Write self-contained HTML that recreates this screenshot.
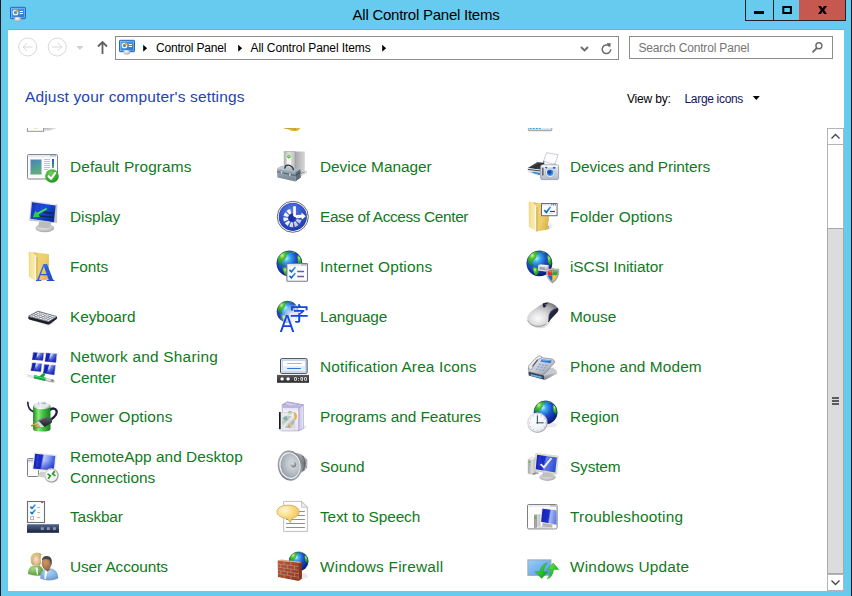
<!DOCTYPE html>
<html lang="en">
<head>
<meta charset="utf-8">
<title>All Control Panel Items</title>
<style>
html,body{margin:0;padding:0;}
body{width:852px;height:596px;overflow:hidden;position:relative;background:#66cbee;font-family:"Liberation Sans",sans-serif;}
#edgeL{position:absolute;left:0;top:0;width:1px;height:596px;background:#1b1b1b;}
#edgeR{position:absolute;left:851px;top:0;width:1px;height:596px;background:#1b1b1b;}
#client{position:absolute;left:8px;top:30px;width:836px;height:561px;background:#fff;}
#cline{position:absolute;left:8px;top:29px;width:836px;height:2px;background:#5bbadb;}
#title{font-size:15.4px;position:absolute;left:0;top:5px;width:852px;text-align:center;font-size:15px;line-height:20px;color:#000;}
#ticon{position:absolute;left:10px;top:6px;width:16px;height:16px;}
.cap{position:absolute;top:0;height:21px;border:1px solid #222;border-top:none;box-sizing:border-box;}
#bmin{left:745px;width:29px;}
#bmax{left:773px;width:27px;}
#bclose{left:799px;width:47px;background:#c75850;border-left:none;}
.abs{position:absolute;}
#addr{position:absolute;left:115px;top:36px;width:504px;height:24px;border:1px solid #8c8c8c;box-sizing:border-box;background:#fff;}
#search{position:absolute;left:629px;top:36px;width:204px;height:23px;border:1px solid #8c8c8c;box-sizing:border-box;background:#fff;}
.t12{position:absolute;font-size:12px;line-height:16px;color:#000;white-space:nowrap;}
#heading{position:absolute;left:25px;top:87px;font-size:15.5px;line-height:20px;color:#2444b0;white-space:nowrap;}
#list{position:absolute;left:8px;top:128px;width:819px;height:463px;overflow:hidden;}
#listin{position:absolute;left:-8px;top:-128px;width:852px;height:596px;}
.it{position:absolute;width:240px;height:32px;}
.it>svg{position:absolute;left:0;top:0;width:32px;height:32px;overflow:visible;}
.lbl{position:absolute;left:44px;top:7px;font-size:15.4px;line-height:20px;color:#107a1c;white-space:nowrap;}
.lbl.two{top:-4.5px;line-height:21px;}
.ln{display:block;}
#sb{position:absolute;left:827px;top:128px;width:17px;height:463px;box-sizing:border-box;border:1px solid #b4b4b4;background:#fff;}
#sbup{position:absolute;left:827px;top:128px;width:17px;height:17px;box-sizing:border-box;border:1px solid #b4b4b4;background:#fff;}
#sbdn{position:absolute;left:827px;top:574px;width:17px;height:17px;box-sizing:border-box;border:1px solid #b4b4b4;background:#fff;}
#thumb{position:absolute;left:827px;top:228px;width:17px;height:346px;box-sizing:border-box;border:1px solid #a8a8a8;background:#dcdcdc;}
</style>
</head>
<body>
<div id="cline"></div>
<div id="client"></div>
<div id="edgeL"></div><div id="edgeR"></div>
<div id="ticon"><svg width="16" height="16" viewBox="0 0 16 16" style="overflow:visible">
<defs>
<linearGradient id="cp1" x1="0" y1="0" x2="1" y2="1"><stop offset="0" stop-color="#58a8f0"/><stop offset="1" stop-color="#2470cc"/></linearGradient>
<radialGradient id="cp2" cx="0.4" cy="0.35" r="0.7"><stop offset="0" stop-color="#ffffff"/><stop offset="1" stop-color="#a4a4a8"/></radialGradient>
</defs>
<rect x="0.5" y="1.3" width="15" height="11.4" rx="0.8" fill="url(#cp1)" stroke="#2468c4" stroke-width="1"/>
<rect x="1.5" y="2.3" width="13" height="9.4" fill="none" stroke="#8ec8f8" stroke-width="0.7" opacity="0.8"/>
<circle cx="5.5" cy="6.5" r="2.3" fill="none" stroke="#fff" stroke-width="1.1"/>
<path d="M5.7 6.3 L5.7 3.6 A2.8 2.8 0 0 1 8.4 6.3z" fill="#f8a020"/>
<path d="M9.8 5.5h3.2M9.8 7.5h3.2" stroke="#fff" stroke-width="1"/>
<ellipse cx="7.7" cy="13.2" rx="3.4" ry="2.3" fill="url(#cp2)"/>
</svg></div>
<div id="title"><span id="title_t" class="fit" style="letter-spacing:-0.247px">All Control Panel Items</span></div>
<div class="cap" id="bmin"><svg width="27" height="19" viewBox="0 0 27 19"><rect x="8" y="11" width="10" height="3" fill="#000"/></svg></div>
<div class="cap" id="bmax"><svg width="25" height="19" viewBox="0 0 25 19"><rect x="9.3" y="7" width="7.6" height="6" fill="none" stroke="#000" stroke-width="2"/></svg></div>
<div class="cap" id="bclose"><svg width="46" height="19" viewBox="0 0 46 19"><path d="M19 6 L22 6 L23.5 8.4 L25 6 L28 6 L25.2 10 L28 14 L25 14 L23.5 11.6 L22 14 L19 14 L21.8 10z" fill="#000"/></svg></div>


<svg class="abs" style="left:16px;top:35px" width="100" height="24" viewBox="0 0 100 24">
 <g fill="none" stroke="#d9d9d9" stroke-width="1">
  <circle cx="11.7" cy="12" r="9"/><circle cx="41.2" cy="12" r="9"/>
  <path d="M16.7 12 H7.2 M11.2 8 L7.2 12 L11.2 16"/>
  <path d="M36.2 12 H45.7 M41.7 8 L45.7 12 L41.7 16"/>
 </g>
 <path d="M60.4 11 h7 l-3.5 4z" fill="#cfcfcf"/>
 <path d="M86.5 19 V7 M82 11.5 L86.5 7 L91 11.5" fill="none" stroke="#606060" stroke-width="1.8"/>
</svg>
<div id="addr"></div>
<div class="abs" style="left:119px;top:39px;width:16px;height:16px"><svg width="16" height="16" viewBox="0 0 16 16" style="overflow:visible">
<defs>
<linearGradient id="cp1_1" x1="0" y1="0" x2="1" y2="1"><stop offset="0" stop-color="#58a8f0"/><stop offset="1" stop-color="#2470cc"/></linearGradient>
<radialGradient id="cp2_1" cx="0.4" cy="0.35" r="0.7"><stop offset="0" stop-color="#ffffff"/><stop offset="1" stop-color="#a4a4a8"/></radialGradient>
</defs>
<rect x="0.5" y="1.3" width="15" height="11.4" rx="0.8" fill="url(#cp1_1)" stroke="#2468c4" stroke-width="1"/>
<rect x="1.5" y="2.3" width="13" height="9.4" fill="none" stroke="#8ec8f8" stroke-width="0.7" opacity="0.8"/>
<circle cx="5.5" cy="6.5" r="2.3" fill="none" stroke="#fff" stroke-width="1.1"/>
<path d="M5.7 6.3 L5.7 3.6 A2.8 2.8 0 0 1 8.4 6.3z" fill="#f8a020"/>
<path d="M9.8 5.5h3.2M9.8 7.5h3.2" stroke="#fff" stroke-width="1"/>
<ellipse cx="7.7" cy="13.2" rx="3.4" ry="2.3" fill="url(#cp2_1)"/>
</svg></div>
<svg class="abs" style="left:142px;top:43px" width="6" height="9" viewBox="0 0 6 9"><path d="M1.2 1.7 L5.1 5.2 L1.2 8.7z" fill="#000"/></svg>
<div class="t12 fit" style="left:156px;top:39.5px;letter-spacing:-0.2px" id="bc1">Control Panel</div>
<svg class="abs" style="left:237px;top:43px" width="6" height="9" viewBox="0 0 6 9"><path d="M1.2 1.7 L5.1 5.2 L1.2 8.7z" fill="#000"/></svg>
<div class="t12 fit" style="left:250.5px;top:39.5px;letter-spacing:-0.081px" id="bc2">All Control Panel Items</div>
<svg class="abs" style="left:381px;top:43px" width="6" height="9" viewBox="0 0 6 9"><path d="M1.2 1.7 L5.1 5.2 L1.2 8.7z" fill="#000"/></svg>
<svg class="abs" style="left:578px;top:42px" width="40" height="14" viewBox="0 0 40 14">
 <path d="M3 5 L6.5 8.5 L10 5" fill="none" stroke="#6b6b6b" stroke-width="1.9"/>
 <path d="M31.5 4.2 A4.3 4.3 0 1 0 32.8 7.3" fill="none" stroke="#6b6b6b" stroke-width="1.5"/>
 <path d="M28.5 1 L32.8 1.2 L32.2 5.5z" fill="#6b6b6b"/>
</svg>
<div id="search"></div>
<div class="t12 fit" style="left:638.5px;top:39.5px;color:#757575;letter-spacing:-0.172px" id="stext">Search Control Panel</div>
<svg class="abs" style="left:811px;top:40px" width="14" height="14" viewBox="0 0 14 14"><circle cx="7.9" cy="5.8" r="3" fill="none" stroke="#6b6b6b" stroke-width="1.4"/><path d="M5.8 8 L1.5 12.3" stroke="#6b6b6b" stroke-width="1.8"/></svg>

<div id="heading" class="fit" style="letter-spacing:0.154px">Adjust your computer's settings</div>
<div class="t12 fit" style="left:627px;top:90.5px;letter-spacing:-0.17px" id="viewby">View by:</div>
<div class="t12 fit" style="left:684.5px;top:90.5px;color:#14145a;letter-spacing:-0.32px" id="large">Large icons</div>
<svg class="abs" style="left:752px;top:95px" width="9" height="6" viewBox="0 0 9 6"><path d="M0.8 1 h7 l-3.5 4z" fill="#000"/></svg>

<div id="list"><div id="listin">
<div class="it" style="left:26px;top:100px"><svg width="32" height="32" viewBox="0 0 32 32">
<path d="M18 27.5 L32 27.5 L24 30.5 L18 30.8z" fill="#c8c8c8" opacity="0.8"/>
<path d="M18 27.5 L28 27.5 L22 28.5 L18 28.6z" fill="#8c8c8c" opacity="0.6"/>
<rect x="1.4" y="26" width="16.2" height="5.3" fill="#fefefe" stroke="#8a8a8e" stroke-width="0.9"/>
<rect x="8" y="27.6" width="3.4" height="0.9" fill="#c8dc30"/>
</svg></div>
<div class="it" style="left:276px;top:100px"><svg width="32" height="32" viewBox="0 0 32 32">
<path d="M6.4 27.8 L24.4 27.8 Q23.4 30 21 30.9 L15.6 30.9 Q13.6 29.6 11 29 Q8.6 28.6 6.4 27.8z" fill="#dcb838"/>
<path d="M6.4 27.8 L17 27.8 Q13 29.4 6.4 27.8z" fill="#b08c1c"/>
<path d="M17.6 28.4v1.4M19.4 28.4v1.4" stroke="#a07c14" stroke-width="0.7"/>
</svg></div>
<div class="it" style="left:526px;top:100px"><svg width="32" height="32" viewBox="0 0 32 32">
<rect x="2.4" y="24" width="23.4" height="6.7" rx="0.8" fill="#f4f6f8" stroke="#909096" stroke-width="0.9"/>
<path d="M3 29.9h22.4" stroke="#b0b0b6" stroke-width="0.8"/>
<path d="M3.8 28.4h1.8M6.8 28.4h1.8M9.8 28.4h1.8M12.8 28.4h1.8" stroke="#18a0e0" stroke-width="1.1"/>
<path d="M16 28.4h9" stroke="#d4ecf8" stroke-width="1"/>
</svg></div>
<div class="it" style="left:26px;top:150px"><svg width="32" height="32" viewBox="0 0 32 32">
<defs>
<linearGradient id="dp1" x1="0" y1="0" x2="0.3" y2="1"><stop offset="0" stop-color="#4a80b4"/><stop offset="0.5" stop-color="#4f9aa0"/><stop offset="1" stop-color="#5fae78"/></linearGradient>
<linearGradient id="dp2" x1="0" y1="0" x2="0" y2="1"><stop offset="0" stop-color="#2458b8"/><stop offset="0.6" stop-color="#3a80a0"/><stop offset="1" stop-color="#5cb858"/></linearGradient>
<radialGradient id="dp3" cx="0.4" cy="0.3" r="0.8"><stop offset="0" stop-color="#6fd05a"/><stop offset="0.6" stop-color="#37a82f"/><stop offset="1" stop-color="#1f8a20"/></radialGradient>
</defs>
<rect x="1.5" y="4.5" width="30" height="24.5" rx="1.3" fill="#fbfbfd" stroke="#85858d" stroke-width="1"/>
<rect x="2.3" y="5.3" width="28.4" height="1.6" fill="#e4e6ee"/>
<path d="M24.5 5.8h1M26.5 5.8h1M28.5 5.8h1" stroke="#6a7088" stroke-width="1"/>
<rect x="4" y="9" width="12" height="16" fill="#d9d6ee"/>
<rect x="4.7" y="9.7" width="10.6" height="14.6" fill="url(#dp1)"/>
<path d="M18 9.5h6M18 11.5h6M18 13.5h6M18 15.5h6M18 17.5h6M18 19.5h4" stroke="#b4bccb" stroke-width="0.9"/>
<rect x="26" y="9" width="2" height="9" fill="url(#dp2)"/>
<circle cx="26" cy="26" r="6.8" fill="url(#dp3)"/>
<path d="M22.6 26.2 L25 28.8 L29.3 22.8" fill="none" stroke="#fff" stroke-width="2.1" stroke-linecap="round" stroke-linejoin="round"/>
</svg><div class="lbl"><span class="ln fit" style="letter-spacing:0.106px">Default Programs</span></div></div>
<div class="it" style="left:26px;top:200px"><svg width="32" height="32" viewBox="0 0 32 32">
<defs>
<linearGradient id="ds1" x1="0" y1="0" x2="1" y2="0.6"><stop offset="0" stop-color="#1a28c8"/><stop offset="0.55" stop-color="#1450d8"/><stop offset="1" stop-color="#0a2f9e"/></linearGradient>
<radialGradient id="ds2" cx="0.45" cy="0.35" r="0.7"><stop offset="0" stop-color="#f0f0f0"/><stop offset="0.6" stop-color="#c8c8c8"/><stop offset="1" stop-color="#9c9c9c"/></radialGradient>
<linearGradient id="ds3" x1="0" y1="0" x2="1" y2="0"><stop offset="0" stop-color="#cfcfcf"/><stop offset="1" stop-color="#efefef"/></linearGradient>
</defs>
<ellipse cx="18.8" cy="28" rx="9.4" ry="4.3" fill="url(#ds2)"/>
<path d="M13 22 L12 27 Q18 29 24 27.5 L25.5 22z" fill="#bcbcbc"/>
<path d="M5 1 L31.3 4.2 L31 23 L3.3 20.6z" fill="url(#ds3)"/>
<path d="M29.2 5 L31.3 4.2 L31 23 L27.8 22.6z" fill="#c4c4c4"/>
<path d="M6 2.3 L29.6 5.4 L28 22.2 L4.4 18.8z" fill="url(#ds1)"/>
<path d="M10.5 4 L12.5 4.3 L11.5 14 L9.5 14z" fill="#3350e0" opacity="0.5"/>
<path d="M15 4.5 L17 4.8 L16 12 L14 12z" fill="#3350e0" opacity="0.5"/>
<path d="M17.6 11.6 L27.8 12.4 L27.7 14 L17.2 13.2z" fill="#14245c"/>
<path d="M13.4 15.2 L27.5 16.4 L27.4 18 L13.3 16.8z" fill="#14245c"/>
<path d="M3.6 19.4 L28 22.4 L28 23 L3.4 20.6z" fill="#bdbdbd"/>
<path d="M20.2 8 L21.3 9.6 L12.5 14.6 L13.9 17 L6.9 17.2 L9.4 10.8 L10.9 13z" fill="#2fd03c"/>
<path d="M20.2 8 L20.75 8.8 L11.3 14 L10.9 13z" fill="#6cf06a" opacity="0.7"/>
</svg><div class="lbl"><span class="ln fit" style="letter-spacing:-0.035px">Display</span></div></div>
<div class="it" style="left:26px;top:250px"><svg width="32" height="32" viewBox="0 0 32 32">
<defs>
<linearGradient id="fo1" x1="0" y1="0" x2="1" y2="0"><stop offset="0" stop-color="#f4df8c"/><stop offset="0.6" stop-color="#f8e9a8"/><stop offset="1" stop-color="#fdf5d4"/></linearGradient>
<linearGradient id="fo2" x1="0" y1="0" x2="1" y2="0.6"><stop offset="0" stop-color="#dcb54a"/><stop offset="0.3" stop-color="#eed274"/><stop offset="0.7" stop-color="#ecce6c"/><stop offset="1" stop-color="#ddb74c"/></linearGradient>
<linearGradient id="fo3" x1="0" y1="0" x2="1" y2="1"><stop offset="0" stop-color="#7aa8f8"/><stop offset="0.45" stop-color="#2c5ce0"/><stop offset="1" stop-color="#1a40b8"/></linearGradient>
</defs>
<path d="M6.7 2.2 L22.9 4 L22.9 29.3 L10.4 31.5 L6.7 20z" fill="url(#fo2)"/>

<path d="M3 1.7 L6.7 2.2 L10.4 6.2 L10.4 31.5 L3.4 26.9z" fill="url(#fo1)"/><path d="M9.3 5 L10.4 6.2 L10.4 31.5 L9.3 30.8z" fill="#fffef6"/><path d="M3 1.7 L3.4 26.9" stroke="#e2c461" stroke-width="0.5"/>
<path d="M10.4 6.2 L10.4 31.5 L11.4 31.3 L11.4 7.2z" fill="#c9a43c"/>
<filter id="fof" x="-0.2" y="-0.2" width="1.4" height="1.4"><feOffset dx="0" dy="0"/></filter><g filter="url(#fof)"><text x="9.8" y="31.4" font-family="Liberation Serif, serif" font-weight="bold" font-size="26" fill="url(#fo3)">A</text></g>
</svg><div class="lbl"><span class="ln fit" style="letter-spacing:-0.1px">Fonts</span></div></div>
<div class="it" style="left:26px;top:300px"><svg width="32" height="32" viewBox="0 0 32 32">
<path d="M2.2 16.4 Q1.8 19 4 19.8 L21.3 24.6 Q23 25 24.4 24 L31.2 18.6 L30.8 16.6 L22.6 21.6z" fill="#1d2026"/>
<path d="M8 20.5 L22 24.5 L27 21.5 L30 22 L23 26 L9 22z" fill="#c8ccd4" opacity="0.3"/>
<path d="M2.4 16.2 Q2.3 15.6 3.2 15.2 L11.4 11 Q12 10.7 13 11 L30.5 16 Q31.3 16.4 30.8 16.9 L23.4 21.6 Q22.6 22 21.6 21.7 L3 16.9 Q2.5 16.7 2.4 16.2z" fill="#70757f"/>
<path d="M3.61 16.12 L5.23 15.29 L7.06 15.77 L5.47 16.60z M6.05 16.75 L7.64 15.92 L9.48 16.40 L7.91 17.24z M8.50 17.39 L10.06 16.56 L11.90 17.04 L10.36 17.87z M10.94 18.03 L12.48 17.19 L14.32 17.67 L12.80 18.51z M13.39 18.66 L14.90 17.83 L16.73 18.31 L15.25 19.15z M15.83 19.30 L17.31 18.46 L19.15 18.94 L17.69 19.78z M18.28 19.94 L19.73 19.10 L21.57 19.58 L20.13 20.42z M20.72 20.57 L22.15 19.73 L23.99 20.21 L22.58 21.06z M5.85 14.97 L7.47 14.14 L9.28 14.62 L7.68 15.45z M8.26 15.60 L9.85 14.77 L11.66 15.25 L10.09 16.08z M10.67 16.23 L12.23 15.40 L14.04 15.88 L12.50 16.71z M13.08 16.87 L14.61 16.03 L16.42 16.51 L14.91 17.35z M15.48 17.50 L16.99 16.66 L18.80 17.14 L17.31 17.98z M17.89 18.13 L19.37 17.30 L21.18 17.78 L19.72 18.62z M20.30 18.77 L21.75 17.93 L23.56 18.41 L22.13 19.25z M22.70 19.40 L24.13 18.56 L25.94 19.04 L24.53 19.88z M8.10 13.81 L9.72 12.99 L11.50 13.46 L9.90 14.29z M10.47 14.45 L12.06 13.61 L13.84 14.09 L12.27 14.92z M12.84 15.08 L14.40 14.24 L16.18 14.72 L14.64 15.56z M15.21 15.71 L16.74 14.87 L18.52 15.35 L17.01 16.19z M17.58 16.34 L19.09 15.50 L20.87 15.98 L19.38 16.82z M19.95 16.97 L21.43 16.13 L23.21 16.61 L21.75 17.45z M22.32 17.60 L23.77 16.76 L25.55 17.24 L24.12 18.08z M24.69 18.23 L26.12 17.39 L27.90 17.86 L26.49 18.71z M10.34 12.66 L11.96 11.84 L13.71 12.31 L12.12 13.14z M12.68 13.29 L14.27 12.46 L16.02 12.94 L14.45 13.77z M15.01 13.92 L16.57 13.09 L18.32 13.56 L16.78 14.40z M17.34 14.55 L18.88 13.71 L20.63 14.19 L19.11 15.02z M19.67 15.18 L21.18 14.34 L22.93 14.81 L21.45 15.65z M22.01 15.80 L23.49 14.96 L25.24 15.44 L23.78 16.28z M24.34 16.43 L25.79 15.59 L27.55 16.06 L26.11 16.91z M26.67 17.06 L28.10 16.21 L29.85 16.69 L28.44 17.54z" fill="#f6f7fa"/>
</svg><div class="lbl"><span class="ln fit" style="letter-spacing:-0.054px">Keyboard</span></div></div>
<div class="it" style="left:26px;top:350px"><svg width="32" height="32" viewBox="0 0 32 32">
<defs>
<linearGradient id="nw1" x1="0" y1="0" x2="1" y2="0.3"><stop offset="0" stop-color="#1a22c4"/><stop offset="0.42" stop-color="#1a2fd0"/><stop offset="0.5" stop-color="#e0e8ff"/><stop offset="0.68" stop-color="#7088ec"/><stop offset="1" stop-color="#1a28b8"/></linearGradient>
<linearGradient id="nw2" x1="0" y1="0" x2="0" y2="1"><stop offset="0" stop-color="#f4f4f4"/><stop offset="0.5" stop-color="#c8cccc"/><stop offset="1" stop-color="#8c9090"/></linearGradient>
<linearGradient id="nw3" x1="0" y1="0" x2="0" y2="1"><stop offset="0" stop-color="#4fe070"/><stop offset="0.5" stop-color="#12b040"/><stop offset="1" stop-color="#0a7a2c"/></linearGradient>
</defs>
<g stroke="#f0e8e0" stroke-width="0.7">
<path d="M7 2 L18.2 2.7 L16.9 10.5 L6 9.8z" fill="url(#nw1)"/>
<path d="M19.8 2.7 L31.2 3.4 L29.9 12.4 L18.8 11.4z" fill="url(#nw1)"/>
<path d="M6 12.4 L16.2 13.4 L14.9 21.8 L4.7 20.8z" fill="url(#nw1)"/>
<path d="M18.1 14.1 L29.9 15.1 L28.2 24.9 L17.1 23.2z" fill="url(#nw1)"/>
</g>
<g fill="#0d1890" opacity="0.55">
<path d="M9.5 2.3 L12 9.9 L6.2 9.6z"/><path d="M22.5 3 L24.5 11.7 L19 11.2z"/>
<path d="M8.5 12.8 L10.5 21.2 L5 20.6z"/><path d="M21 14.5 L23 23.8 L17.4 23z"/>
</g>
<linearGradient id="nw5" x1="0" y1="0" x2="0" y2="1"><stop offset="0.3" stop-color="#1a28c0" stop-opacity="0"/><stop offset="1" stop-color="#1420b0" stop-opacity="0.85"/></linearGradient><g fill="url(#nw5)"><path d="M7 2 L18.2 2.7 L16.9 10.5 L6 9.8z"/><path d="M19.8 2.7 L31.2 3.4 L29.9 12.4 L18.8 11.4z"/><path d="M6 12.4 L16.2 13.4 L14.9 21.8 L4.7 20.8z"/><path d="M18.1 14.1 L29.9 15.1 L28.2 24.9 L17.1 23.2z"/></g>
<path d="M2 25.3 L27 31" stroke="url(#nw2)" stroke-width="3" stroke-linecap="round" fill="none"/>
<path d="M2 25.3 L27 31" stroke="#dfe3e3" stroke-width="1.6" stroke-linecap="round" fill="none"/>
<circle cx="26.3" cy="30.6" r="1.1" fill="#7c8080"/>
<path d="M8 26.7 L19.5 29.3" stroke="#0fa63c" stroke-width="3.4" fill="none"/>
<path d="M14.5 27.6 L17.6 24.6" stroke="#0fa63c" stroke-width="3" stroke-linecap="round" fill="none"/>
<path d="M8.2 26 L19.6 28.6" stroke="#52e078" stroke-width="1" fill="none"/>
</svg><div class="lbl two"><span class="ln fit" style="letter-spacing:0.222px">Network and Sharing</span><span class="ln fit" style="letter-spacing:-0.08px">Center</span></div></div>
<div class="it" style="left:26px;top:400px"><svg width="32" height="32" viewBox="0 0 32 32">
<defs>
<linearGradient id="pw1" x1="0" y1="0" x2="1" y2="0"><stop offset="0" stop-color="#18861e"/><stop offset="0.3" stop-color="#8ae878"/><stop offset="0.55" stop-color="#48c444"/><stop offset="1" stop-color="#177f1e"/></linearGradient>
<linearGradient id="pw2" x1="0" y1="0" x2="1" y2="0"><stop offset="0" stop-color="#b8bcc4"/><stop offset="0.4" stop-color="#ffffff"/><stop offset="1" stop-color="#a8acb4"/></linearGradient>
<linearGradient id="pw3" x1="0" y1="0" x2="0" y2="1"><stop offset="0" stop-color="#62666e"/><stop offset="0.5" stop-color="#3a3d45"/><stop offset="1" stop-color="#1c1e24"/></linearGradient>
<linearGradient id="pw4" x1="0" y1="0" x2="0" y2="1"><stop offset="0" stop-color="#f6d890"/><stop offset="1" stop-color="#b07820"/></linearGradient>
</defs>
<path d="M1.8 2.4 Q2 9.5 7.5 11.8" fill="none" stroke="#1c1c3a" stroke-width="1.6" stroke-linecap="round"/>
<path d="M24 9.8 Q28.5 7 30.5 10.5 Q32 14.5 25 19.5" fill="none" stroke="#1e1e40" stroke-width="2.4" stroke-linecap="round"/>
<path d="M7.1 6 L7.1 29 Q7.1 31.6 15.8 31.6 Q24.5 31.6 24.5 29 L24.5 6z" fill="url(#pw1)"/>
<ellipse cx="15.8" cy="6" rx="8.7" ry="3.2" fill="url(#pw2)"/>
<ellipse cx="15.8" cy="5.2" rx="7.2" ry="2.4" fill="#e6e9ee"/>
<ellipse cx="15.8" cy="3.2" rx="4.2" ry="1.7" fill="url(#pw2)"/>
<ellipse cx="16.5" cy="3.2" rx="2" ry="0.8" fill="#9cc4e8"/>
<path d="M12.6 23.3 L5.8 25.6" stroke="url(#pw4)" stroke-width="1.7" stroke-linecap="round"/>
<path d="M15.6 25.6 L9.8 27.6" stroke="url(#pw4)" stroke-width="1.7" stroke-linecap="round"/>
<path d="M10.4 21.5 L18.8 17 Q20 16.6 21 16.9 L25 18.6 Q26.2 19.2 26.1 20.5 L25.9 22.8 L18.5 27 L14 27z" fill="url(#pw3)"/>
<path d="M10.4 21.5 L18.8 17 L21 16.9 L13 21.3z" fill="#7c8088"/>
<path d="M10.4 21.5 L13 21.3 L18.5 27 L14 27z" fill="#d8dae0"/>
</svg><div class="lbl"><span class="ln fit" style="letter-spacing:0.117px">Power Options</span></div></div>
<div class="it" style="left:26px;top:450px"><svg width="32" height="32" viewBox="0 0 32 32">
<defs>
<linearGradient id="ra1" x1="0" y1="0" x2="1" y2="0.15"><stop offset="0" stop-color="#1420c0"/><stop offset="0.42" stop-color="#1a2cc8"/><stop offset="0.5" stop-color="#c0ccfa"/><stop offset="0.75" stop-color="#8098f0"/><stop offset="1" stop-color="#3858dc"/></linearGradient>
<linearGradient id="ra2" x1="0" y1="0" x2="1" y2="1"><stop offset="0" stop-color="#e8e8e8"/><stop offset="1" stop-color="#8e8e8e"/></linearGradient>
<radialGradient id="ra3" cx="0.4" cy="0.35" r="0.8"><stop offset="0" stop-color="#ffffff"/><stop offset="0.7" stop-color="#f0f0f0"/><stop offset="1" stop-color="#d0d0d0"/></radialGradient>
</defs>
<rect x="1.5" y="8.5" width="11" height="18" rx="0.8" fill="#fafafa" stroke="#7e8086" stroke-width="1"/>
<path d="M2 10.2h10" stroke="#8a98b4" stroke-width="1"/>
<path d="M2 11.8h10" stroke="#c0c4cc" stroke-width="0.8"/>
<path d="M14.5 21.5 L11.3 26.3 L20 28 L21 22z" fill="#cfcfcf"/>
<path d="M8 2.3 L31 4.7 L29 21.9 L6 19.6z" fill="#e9e9e4"/>
<path d="M9.1 3.7 L29.3 6 L27.6 20.5 L7.4 18.5z" fill="url(#ra1)"/>
<path d="M11 5 L13 5.2 L12 17 L10 17z" fill="#4058e0" opacity="0.45"/>
<linearGradient id="ra5" x1="0" y1="0" x2="0" y2="1"><stop offset="0.4" stop-color="#1a2cc8" stop-opacity="0"/><stop offset="1" stop-color="#1424b8" stop-opacity="0.7"/></linearGradient><path d="M9.1 3.7 L29.3 6 L27.6 20.5 L7.4 18.5z" fill="url(#ra5)"/>
<circle cx="25.5" cy="25.5" r="6.6" fill="url(#ra3)" stroke="url(#ra2)" stroke-width="1.3"/>
<path d="M21.8 23.3 L24.3 25.6 L21.8 28.2" fill="none" stroke="#2a9a28" stroke-width="1.7" transform="rotate(-8 25.5 25.5)"/>
<path d="M29.3 21.6 L26.8 24 L29.3 26.4" fill="none" stroke="#2a9a28" stroke-width="1.7" transform="rotate(-8 25.5 25.5)"/>
</svg><div class="lbl two"><span class="ln fit" style="letter-spacing:0.04px">RemoteApp and Desktop</span><span class="ln fit" style="letter-spacing:-0.04px">Connections</span></div></div>
<div class="it" style="left:26px;top:500px"><svg width="32" height="32" viewBox="0 0 32 32">
<defs>
<linearGradient id="tb1" x1="0" y1="0" x2="0" y2="1"><stop offset="0" stop-color="#56658a"/><stop offset="0.5" stop-color="#36466a"/><stop offset="1" stop-color="#14203c"/></linearGradient>
<linearGradient id="tb2" x1="0" y1="0" x2="0" y2="1"><stop offset="0" stop-color="#38b0f0"/><stop offset="1" stop-color="#0a64c8"/></linearGradient>
</defs>
<rect x="1.5" y="1.5" width="17" height="21" fill="#fdfdfd" stroke="#6e6e6e" stroke-width="1.1"/>
<rect x="15" y="2" width="2.2" height="0.9" fill="#e03050"/>
<path d="M4.3 6.6 L6 8.4 L9.4 4.4" fill="none" stroke="url(#tb2)" stroke-width="1.6"/>
<path d="M4.3 11.8 L6 13.6 L9.4 9.6" fill="none" stroke="url(#tb2)" stroke-width="1.6"/>
<rect x="4.6" y="16.6" width="3" height="3.1" fill="#fff" stroke="#a4a4a8" stroke-width="0.8"/>
<path d="M11.2 7.5h3M11.2 12.5h3M11.2 17.5h3" stroke="#b0b0b4" stroke-width="0.9"/>
<rect x="1" y="24.2" width="32" height="8.6" fill="url(#tb1)"/>
<rect x="1" y="24.2" width="32" height="0.8" fill="#7886a8" opacity="0.7"/>
<g fill="#8a94ac"><rect x="14.8" y="27.2" width="3" height="2.8"/><rect x="20.8" y="27.2" width="3" height="2.8"/><rect x="26.9" y="27.2" width="3" height="2.8"/></g>
</svg><div class="lbl"><span class="ln fit" style="letter-spacing:-0.166px">Taskbar</span></div></div>
<div class="it" style="left:26px;top:550px"><svg width="32" height="32" viewBox="0 0 32 32">
<defs>
<radialGradient id="us1" cx="0.35" cy="0.3" r="0.9"><stop offset="0" stop-color="#a8d888"/><stop offset="0.6" stop-color="#6aaa4c"/><stop offset="1" stop-color="#4a8a38"/></radialGradient>
<radialGradient id="us2" cx="0.45" cy="0.3" r="0.9"><stop offset="0" stop-color="#b4d4f4"/><stop offset="0.6" stop-color="#7aa8dc"/><stop offset="1" stop-color="#5684c0"/></radialGradient>
<radialGradient id="us3" cx="0.4" cy="0.35" r="0.8"><stop offset="0" stop-color="#fbe0c0"/><stop offset="1" stop-color="#d8a478"/></radialGradient>
<radialGradient id="us4" cx="0.4" cy="0.4" r="0.8"><stop offset="0" stop-color="#d09a68"/><stop offset="1" stop-color="#8a5a38"/></radialGradient>
<linearGradient id="us5" x1="0" y1="0" x2="1" y2="1"><stop offset="0" stop-color="#e6d49a"/><stop offset="1" stop-color="#b09050"/></linearGradient>
</defs>
<path d="M2 24 Q2 17 7.5 15.6 L13 15.4 Q18 17 17.6 25 Q10 27 2 24z" fill="url(#us1)"/>
<path d="M9.5 17.5 L11.8 17.5 L12 24.5 L11 25z" fill="#f4f6f4"/>
<path d="M4.6 10 Q4 3 10.5 2.4 Q14.5 2.4 15.8 4.6 Q14.5 6 14.6 9 Q15.4 13 14 15.4 L6.2 15 Q4.6 13 4.6 10z" fill="url(#us5)"/>
<ellipse cx="10.6" cy="10.6" rx="3.5" ry="4.9" fill="url(#us3)"/>
<path d="M6.8 8 Q9 4.5 14.2 6.4 Q12 4 9 4.4 Q6.8 5.4 6.8 8z" fill="#d8c488"/>
<path d="M14.2 28.5 Q14 20.5 20 18.6 L26 18.4 Q32.4 20.4 32.2 28.6 Q23 32.6 14.2 28.5z" fill="url(#us2)"/>
<path d="M18.8 20 L21.6 21 L19.6 29.6 L18.4 29z" fill="#f6f8fb"/>
<path d="M18.5 19 L22 18 L24.5 19 L21.5 21.5z" fill="#8a5c3a"/>
<ellipse cx="20.6" cy="13.6" rx="4.9" ry="6.3" fill="url(#us4)"/>
<path d="M15.9 11.5 Q15.5 6 21 6 Q26.4 6.4 25.8 13 L25 15 Q24.6 10.5 22.5 9.4 Q19 8.6 17 9.6 Q16.2 10.4 15.9 11.5z" fill="#45454a"/>
</svg><div class="lbl"><span class="ln fit" style="letter-spacing:-0.102px">User Accounts</span></div></div>
<div class="it" style="left:276px;top:150px"><svg width="32" height="32" viewBox="0 0 32 32">
<defs>
<linearGradient id="dm1" x1="0" y1="0" x2="1" y2="0"><stop offset="0" stop-color="#b8b8b8"/><stop offset="0.5" stop-color="#dedede"/><stop offset="1" stop-color="#c2c2c2"/></linearGradient>
<linearGradient id="dm2" x1="0" y1="0" x2="1" y2="0"><stop offset="0" stop-color="#a0a0a0"/><stop offset="0.6" stop-color="#c8c8c8"/><stop offset="1" stop-color="#dcdcdc"/></linearGradient>
<linearGradient id="dm3" x1="0" y1="0" x2="0" y2="1"><stop offset="0" stop-color="#a2b2c0"/><stop offset="1" stop-color="#74848f"/></linearGradient>
<linearGradient id="dm4" x1="0" y1="0" x2="1" y2="1"><stop offset="0" stop-color="#c8d4dc"/><stop offset="1" stop-color="#9aaab6"/></linearGradient>
<radialGradient id="dm5" cx="0.5" cy="0.4" r="0.6"><stop offset="0" stop-color="#a8ff80"/><stop offset="1" stop-color="#1f9a18"/></radialGradient>
</defs>
<path d="M22 24 L31 20.5 L31 23 L24 27z" fill="#b0b0b0" opacity="0.45"/>
<path d="M25 22.5 l4 -1.4 l0 1 l-4 1.6z" fill="#303030"/>
<path d="M18.8 1.4 L28.9 1.6 L28.9 22 L18.8 25z" fill="url(#dm2)"/>
<path d="M19.5 3h9M19.5 5h9M19.5 7h9M19.5 9h9M19.5 11h9M19.5 13h9M19.5 15h9M19.5 17h9M19.5 19h9M19.5 21h9" stroke="#b4b4b4" stroke-width="0.5" opacity="0.7"/>
<rect x="8.1" y="1.4" width="10.7" height="20" fill="url(#dm1)"/>
<rect x="8.1" y="1.4" width="10.7" height="20" fill="none" stroke="#a6a6a6" stroke-width="0.6"/>
<rect x="10.4" y="4.4" width="5.2" height="11" fill="#f6f6f6" stroke="#c0c0c0" stroke-width="0.4"/>
<circle cx="12.9" cy="6.6" r="1.8" fill="url(#dm5)"/>
<path d="M1 18.2 L5.4 15.5 L24.3 19.2 L19.5 22.5z" fill="url(#dm4)"/>
<path d="M1 18.2 L19.5 22.5 L19.5 31.6 L1.4 27.5z" fill="url(#dm3)"/>
<path d="M19.5 22.5 L24.3 19.2 L24.9 27.5 L19.5 31.6z" fill="#5c6c7a"/>
<path d="M1 21 L19.5 25 L19.5 26.2 L1.1 22.2z" fill="#4a5a6a" opacity="0.8"/>
<path d="M19.5 25 L24.5 21.6 L24.6 22.8 L19.5 26.2z" fill="#3c4c5a" opacity="0.8"/>
<rect x="4.6" y="20.8" width="1.8" height="3.4" rx="0.5" fill="#dfe5ea" stroke="#56646f" stroke-width="0.4"/>
<rect x="13" y="22.8" width="1.8" height="3.4" rx="0.5" fill="#dfe5ea" stroke="#56646f" stroke-width="0.4"/>
<path d="M8.8 18 Q9.5 14.6 12.6 15.2 Q16.5 16 17.4 19.6" fill="none" stroke="#2a2e34" stroke-width="1.3" stroke-linecap="round"/>
</svg><div class="lbl"><span class="ln fit" style="letter-spacing:-0.03px">Device Manager</span></div></div>
<div class="it" style="left:276px;top:200px"><svg width="32" height="32" viewBox="0 0 32 32">
<defs>
<radialGradient id="ea1" cx="0.45" cy="0.3" r="0.8"><stop offset="0" stop-color="#5a7ae8"/><stop offset="0.6" stop-color="#2c4cc4"/><stop offset="1" stop-color="#1a30a0"/></radialGradient>
<linearGradient id="ea2" x1="0" y1="0" x2="1" y2="1"><stop offset="0" stop-color="#ffffff"/><stop offset="0.5" stop-color="#eeeeee"/><stop offset="1" stop-color="#a8acb8"/></linearGradient>
</defs>
<circle cx="16.8" cy="16.8" r="15.5" fill="#fff" stroke="#68686c" stroke-width="1"/>
<circle cx="16.8" cy="16.8" r="14.1" fill="url(#ea1)"/>
<circle cx="15.8" cy="17.6" r="4.2" fill="#1c30a4"/>
<path d="M20.79 18.99 L25.46 20.07 A9.2 9.2 0 0 1 23.65 23.79 L19.92 20.77 A4.4 4.4 0 0 0 20.79 18.99z M19.39 21.32 L22.54 24.94 A9.2 9.2 0 0 1 18.88 26.89 L17.64 22.25 A4.4 4.4 0 0 0 19.39 21.32z M16.88 22.38 L17.30 27.16 A9.2 9.2 0 0 1 13.20 26.59 L14.92 22.11 A4.4 4.4 0 0 0 16.88 22.38z M14.23 21.77 L11.76 25.89 A9.2 9.2 0 0 1 8.78 23.01 L12.81 20.40 A4.4 4.4 0 0 0 14.23 21.77z M12.45 19.72 L8.03 21.59 A9.2 9.2 0 0 1 7.31 17.52 L12.11 17.77 A4.4 4.4 0 0 0 12.45 19.72z M12.21 17.01 L7.54 15.93 A9.2 9.2 0 0 1 9.35 12.21 L13.08 15.23 A4.4 4.4 0 0 0 12.21 17.01z M13.61 14.68 L10.46 11.06 A9.2 9.2 0 0 1 14.12 9.11 L15.36 13.75 A4.4 4.4 0 0 0 13.61 14.68z" fill="url(#ea2)"/>
<path d="M17.2 6.2 h2.7 v9.4 l-1.4 1.6 l-1.3 -1.4z" fill="#fff"/>
<path d="M18.5 16.6 L20.5 15.1 L25.6 14.8 L25.4 12.6 L29.8 16.2 L25.8 19.7 L25.7 17.7 L20.6 18.2z" fill="#fff"/>
</svg><div class="lbl"><span class="ln fit" style="letter-spacing:-0.36px">Ease of Access Center</span></div></div>
<div class="it" style="left:276px;top:250px"><svg width="32" height="32" viewBox="0 0 32 32">
<defs>
<linearGradient id="io2" x1="0" y1="0" x2="0" y2="1"><stop offset="0" stop-color="#38b0f0"/><stop offset="1" stop-color="#0a5cc0"/></linearGradient>
</defs>
<defs><radialGradient id="ioGo" cx="0.38" cy="0.3" r="0.75"><stop offset="0" stop-color="#b4f2ff"/><stop offset="0.2" stop-color="#3ca8f0"/><stop offset="0.5" stop-color="#1c50c8"/><stop offset="0.8" stop-color="#12289a"/><stop offset="1" stop-color="#0a1460"/></radialGradient>
<radialGradient id="ioGg" cx="0.38" cy="0.3" r="0.8"><stop offset="0" stop-color="#d4f480"/><stop offset="0.3" stop-color="#48c030"/><stop offset="0.75" stop-color="#1a8a24"/><stop offset="1" stop-color="#0c5a20"/></radialGradient>
<clipPath id="ioGc"><circle cx="0" cy="0" r="10"/></clipPath></defs>
<g transform="translate(13.4 13.4) scale(1.2700)"><circle cx="0" cy="0" r="10" fill="url(#ioGo)"/>
<g clip-path="url(#ioGc)" fill="url(#ioGg)">
<path d="M-9.6 -3 Q-9 -7 -5.5 -8.8 Q-2 -10.4 0.5 -9.4 Q-0.5 -7.6 -2.6 -7 Q-1.6 -5 -3.4 -3.6 Q-4.6 -1.4 -6 -1.6 Q-6.4 0.4 -4.6 1.4 L-5.6 1.8 Q-8.4 0.6 -9.6 -3z"/>
<path d="M-5.4 3.2 Q-3 2.4 -1.2 4 Q0.4 5.4 -0.6 7.4 Q-1.6 9.4 -3 10 Q-4.4 8 -4.6 6 Q-5.6 4.6 -5.4 3.2z"/>
<path d="M6.4 -6.6 Q8 -6.4 8.6 -4.4 Q10.4 -2 10 1.4 Q8.6 2.4 7.6 0.4 Q6 -1 6.6 -3 Q5.6 -5 6.4 -6.6z"/>
<path d="M2 -9.8 Q4 -9.6 5 -8.4 Q3.6 -7.6 2.4 -8.4z"/>
</g>
<circle cx="0" cy="0" r="10" fill="none" stroke="#0c1a66" stroke-width="0.5" opacity="0.6"/></g>
<rect x="10.9" y="13.6" width="20.6" height="17.6" rx="0.8" fill="#fcfcfe" stroke="#7c7c84" stroke-width="1.1"/>
<rect x="11.6" y="14.3" width="19.2" height="1.5" fill="#e2e4ee"/>
<path d="M25.5 14.9h1M27.5 14.9h1M29.3 14.9h1" stroke="#5a6078" stroke-width="1"/>
<path d="M13.4 19.8 L15.4 21.8 L19.4 17" fill="none" stroke="url(#io2)" stroke-width="1.7"/>
<path d="M13.4 25.8 L15.4 27.8 L19.4 23" fill="none" stroke="url(#io2)" stroke-width="1.7"/>
<path d="M21.2 21.5h6.8M21.2 26.5h6.8" stroke="#6a5c9c" stroke-width="1.4"/>
</svg><div class="lbl"><span class="ln fit" style="letter-spacing:0.172px">Internet Options</span></div></div>
<div class="it" style="left:276px;top:300px"><svg width="32" height="32" viewBox="0 0 32 32">
<defs>
<radialGradient id="lg1" cx="0.85" cy="0.85" r="0.75"><stop offset="0" stop-color="#fff" stop-opacity="1"/><stop offset="0.45" stop-color="#fff" stop-opacity="0.85"/><stop offset="1" stop-color="#fff" stop-opacity="0"/></radialGradient>
</defs>
<defs><radialGradient id="lgGo" cx="0.38" cy="0.3" r="0.75"><stop offset="0" stop-color="#b4f2ff"/><stop offset="0.2" stop-color="#3ca8f0"/><stop offset="0.5" stop-color="#1c50c8"/><stop offset="0.8" stop-color="#12289a"/><stop offset="1" stop-color="#0a1460"/></radialGradient>
<radialGradient id="lgGg" cx="0.38" cy="0.3" r="0.8"><stop offset="0" stop-color="#d4f480"/><stop offset="0.3" stop-color="#48c030"/><stop offset="0.75" stop-color="#1a8a24"/><stop offset="1" stop-color="#0c5a20"/></radialGradient>
<clipPath id="lgGc"><circle cx="0" cy="0" r="10"/></clipPath></defs>
<g transform="translate(11.6 11.8) scale(1.0700)"><circle cx="0" cy="0" r="10" fill="url(#lgGo)"/>
<g clip-path="url(#lgGc)" fill="url(#lgGg)">
<path d="M-9.6 -3 Q-9 -7 -5.5 -8.8 Q-2 -10.4 0.5 -9.4 Q-0.5 -7.6 -2.6 -7 Q-1.6 -5 -3.4 -3.6 Q-4.6 -1.4 -6 -1.6 Q-6.4 0.4 -4.6 1.4 L-5.6 1.8 Q-8.4 0.6 -9.6 -3z"/>
<path d="M-5.4 3.2 Q-3 2.4 -1.2 4 Q0.4 5.4 -0.6 7.4 Q-1.6 9.4 -3 10 Q-4.4 8 -4.6 6 Q-5.6 4.6 -5.4 3.2z"/>
<path d="M6.4 -6.6 Q8 -6.4 8.6 -4.4 Q10.4 -2 10 1.4 Q8.6 2.4 7.6 0.4 Q6 -1 6.6 -3 Q5.6 -5 6.4 -6.6z"/>
<path d="M2 -9.8 Q4 -9.6 5 -8.4 Q3.6 -7.6 2.4 -8.4z"/>
</g>
<circle cx="0" cy="0" r="10" fill="none" stroke="#0c1a66" stroke-width="0.5" opacity="0.6"/></g>
<circle cx="11.6" cy="11.8" r="11" fill="url(#lg1)"/>
<filter id="lgf" x="-0.2" y="-0.2" width="1.4" height="1.4"><feOffset dx="0" dy="0"/></filter><g filter="url(#lgf)"><text transform="translate(3.7 31.6) scale(0.92 1)" font-family="Liberation Sans, sans-serif" font-size="23.8" fill="#1546e0">A</text>
<text x="13.6" y="20.6" font-family="Noto Sans CJK SC, sans-serif" font-size="19.5" font-weight="500" fill="#1546e0">字</text></g>
</svg><div class="lbl"><span class="ln fit" style="letter-spacing:-0.17px">Language</span></div></div>
<div class="it" style="left:276px;top:350px"><svg width="32" height="32" viewBox="0 0 32 32">
<defs>
<linearGradient id="nt1" x1="0" y1="0" x2="0" y2="1"><stop offset="0" stop-color="#5a5a5a"/><stop offset="1" stop-color="#2c2c2c"/></linearGradient>
</defs>
<rect x="4.5" y="8.6" width="26.6" height="14.8" rx="1.2" fill="#dbe9fb" stroke="#4c4c50" stroke-width="1"/>
<rect x="6.4" y="10.6" width="22.8" height="10.8" fill="#fff" stroke="#a8c4ec" stroke-width="0.6"/>
<rect x="6.7" y="16" width="22.2" height="5.1" fill="#e6eefa"/>
<path d="M11.1 13.5h14.4" stroke="#b49a9a" stroke-width="0.8"/>
<path d="M11.1 18.5h13.8" stroke="#2a7ae0" stroke-width="1"/>
<rect x="1" y="24.9" width="32" height="7.9" fill="url(#nt1)"/>
<circle cx="6.1" cy="28.9" r="1.7" fill="#fff"/><circle cx="12.1" cy="28.9" r="1.7" fill="#fff"/>
<filter id="ntf" x="-0.1" y="-0.2" width="1.2" height="1.4"><feOffset dx="0" dy="0"/></filter><g filter="url(#ntf)"><text x="17.9" y="30.9" font-family="Liberation Sans, sans-serif" font-weight="bold" font-size="5.4" letter-spacing="0.75" fill="#fff">0:00</text></g>
</svg><div class="lbl"><span class="ln fit" style="letter-spacing:0.146px">Notification Area Icons</span></div></div>
<div class="it" style="left:276px;top:400px"><svg width="32" height="32" viewBox="0 0 32 32">
<defs>
<linearGradient id="pg1" x1="0" y1="0" x2="0" y2="1"><stop offset="0" stop-color="#dcd8f0"/><stop offset="0.3" stop-color="#f4f3fa"/><stop offset="1" stop-color="#e4e2f2"/></linearGradient>
<linearGradient id="pg2" x1="0" y1="0" x2="1" y2="0"><stop offset="0" stop-color="#c8c4e4"/><stop offset="1" stop-color="#e6e4f4"/></linearGradient>
<linearGradient id="pg3" x1="0" y1="0" x2="1" y2="1"><stop offset="0" stop-color="#f4f4f4"/><stop offset="0.35" stop-color="#b8c0c8"/><stop offset="0.5" stop-color="#f0f0e0"/><stop offset="0.7" stop-color="#a8b0c0"/><stop offset="1" stop-color="#e8e8f0"/></linearGradient>
</defs>
<path d="M22 28 L31 25 L28 29.5 L22.5 31z" fill="#c0c0c8" opacity="0.4"/>
<path d="M22.8 7.6 L27.5 5.2 L27.5 28.4 L22.8 30.9z" fill="url(#pg2)" stroke="#9c94c8" stroke-width="0.5"/>
<path d="M6.1 4.6 L11.4 1.7 L27.8 4.8 L22.8 7.6z" fill="#b8b2dc" stroke="#948cc4" stroke-width="0.5"/>
<path d="M11 3.2 L24.6 5.6 L23 6.6 L9.4 4z" fill="#f2f1fa"/>
<rect x="6.1" y="5.1" width="16.7" height="25.8" fill="url(#pg1)" stroke="#9c94c8" stroke-width="0.6"/>
<rect x="6.4" y="5.4" width="16.1" height="2.6" fill="#bcb6de"/>
<path d="M12 12 Q14 10 16 12 L15 15 L11.5 14.5z" fill="#7cc070"/>
<path d="M16.6 12 Q20.5 11.6 21 16 Q21 20.5 17.4 21 Q19.6 16 16.6 12z" fill="#f0b040"/>
<path d="M15.6 17 L19 17 L19 21 L16 21z" fill="#e8d070" opacity="0.8"/>
<path d="M12 25 L17 23 L18 28 L14 29z" fill="#78b878" opacity="0.7"/>
<rect x="4" y="12.3" width="14.2" height="18.6" fill="#e6e9ee" opacity="0.75" stroke="#aab0bc" stroke-width="0.4"/>
<circle cx="12.2" cy="21.8" r="6.3" fill="url(#pg3)"/>
<path d="M12.2 21.8 L6.6 19 A6.3 6.3 0 0 1 8.6 16.6z" fill="#50c858" opacity="0.8"/>
<path d="M12.2 21.8 L8.6 16.6 A6.3 6.3 0 0 1 10.4 15.7z" fill="#5080e0" opacity="0.6"/>
<path d="M12.2 21.8 L17 25.8 A6.3 6.3 0 0 1 14.8 27.5z" fill="#e8d860" opacity="0.7"/>
<path d="M12.2 21.8 L14.8 27.5 A6.3 6.3 0 0 1 12.6 28.1z" fill="#e88080" opacity="0.5"/>
<circle cx="12.2" cy="21.8" r="1.7" fill="#f4f6f8" stroke="#a0a8b0" stroke-width="0.4"/>
<circle cx="12.2" cy="21.8" r="0.7" fill="#d4e4d4"/>
<rect x="3" y="12.1" width="1.7" height="17" fill="#1a1a1c"/>
</svg><div class="lbl"><span class="ln fit" style="letter-spacing:-0.04px">Programs and Features</span></div></div>
<div class="it" style="left:276px;top:450px"><svg width="32" height="32" viewBox="0 0 32 32">
<defs>
<linearGradient id="sd1" x1="0" y1="0" x2="1" y2="1"><stop offset="0" stop-color="#b4b8c0"/><stop offset="0.5" stop-color="#7c828a"/><stop offset="1" stop-color="#a4a8b0"/></linearGradient>
<radialGradient id="sd2" cx="0.62" cy="0.45" r="0.62"><stop offset="0" stop-color="#d8dce2"/><stop offset="0.55" stop-color="#bcc2ca"/><stop offset="1" stop-color="#9aa0aa"/></radialGradient>
<radialGradient id="sd3" cx="0.35" cy="0.3" r="0.7"><stop offset="0" stop-color="#ececec"/><stop offset="1" stop-color="#74787e"/></radialGradient>
<linearGradient id="sd4" x1="0" y1="0" x2="0" y2="1"><stop offset="0" stop-color="#a8acb2"/><stop offset="0.5" stop-color="#787c82"/><stop offset="1" stop-color="#9a9ea4"/></linearGradient>
</defs>
<path d="M20 3 Q26 4 28 6.4 L31.2 9.5 L31.2 17.4 L28.5 20.5 Q26 23 21 24z" fill="url(#sd4)"/>
<path d="M26.6 6 Q28.8 9 28.8 13 Q28.8 17.4 26.8 21" fill="none" stroke="#5c6066" stroke-width="0.9"/>
<path d="M28.6 7.4 Q30.6 10 30.6 13.4 Q30.6 16.4 29.2 19" fill="none" stroke="#d0d4d8" stroke-width="0.8"/>
<g transform="rotate(-8 13.8 15.6)">
<ellipse cx="13.8" cy="15.6" rx="12.1" ry="15.2" fill="url(#sd1)"/>
<ellipse cx="13.9" cy="15.6" rx="10.6" ry="13.5" fill="#eceff3"/>
<ellipse cx="14.1" cy="15.6" rx="9.5" ry="12.3" fill="url(#sd2)"/>
</g>
<circle cx="17.4" cy="14.6" r="2.8" fill="url(#sd3)"/>
</svg><div class="lbl"><span class="ln fit">Sound</span></div></div>
<div class="it" style="left:276px;top:500px"><svg width="32" height="32" viewBox="0 0 32 32">
<defs>
<radialGradient id="ts1" cx="0.35" cy="0.3" r="0.8"><stop offset="0" stop-color="#fff6d8"/><stop offset="0.5" stop-color="#fbd97c"/><stop offset="1" stop-color="#f0bc48"/></radialGradient>
</defs>
<path d="M8 32.2 L32.2 32.2 L32.2 8z" fill="#b0b0b8" opacity="0.25"/>
<path d="M7.7 1.4 L25.6 1.4 L31.4 7.2 L31.4 31.4 L7.7 31.4z" fill="#fff" stroke="#b8b8be" stroke-width="0.9"/>
<path d="M25.6 1.4 L25.6 7.2 L31.4 7.2z" fill="#eeeef2" stroke="#b8b8be" stroke-width="0.8"/>
<path d="M10.1 11.5h18.8M10.1 15.5h18.8M10.1 19.5h18.8M10.1 23.5h18.8M10.1 27.5h18.8" stroke="#8e8e96" stroke-width="1"/>
<path d="M12.1 5.1 C18.5 5.1 23.2 8 23.2 11.8 C23.2 15 20 17.6 16.1 18.2 L14.3 22.6 L11.2 18.4 C5.4 18.2 1 15.4 1 11.8 C1 8 5.8 5.1 12.1 5.1z" fill="url(#ts1)" stroke="#c4aa5c" stroke-width="0.8"/>
</svg><div class="lbl"><span class="ln fit" style="letter-spacing:-0.124px">Text to Speech</span></div></div>
<div class="it" style="left:276px;top:550px"><svg width="32" height="32" viewBox="0 0 32 32">
<defs>
<linearGradient id="fw1" x1="0" y1="0" x2="1" y2="1"><stop offset="0" stop-color="#bc5c3c"/><stop offset="0.5" stop-color="#a84628"/><stop offset="1" stop-color="#8e361c"/></linearGradient>
</defs>
<ellipse cx="25" cy="26" rx="7" ry="3" fill="#b8b8c0" opacity="0.3"/>
<defs><radialGradient id="fwGo" cx="0.38" cy="0.3" r="0.75"><stop offset="0" stop-color="#b4f2ff"/><stop offset="0.2" stop-color="#3ca8f0"/><stop offset="0.5" stop-color="#1c50c8"/><stop offset="0.8" stop-color="#12289a"/><stop offset="1" stop-color="#0a1460"/></radialGradient>
<radialGradient id="fwGg" cx="0.38" cy="0.3" r="0.8"><stop offset="0" stop-color="#d4f480"/><stop offset="0.3" stop-color="#48c030"/><stop offset="0.75" stop-color="#1a8a24"/><stop offset="1" stop-color="#0c5a20"/></radialGradient>
<clipPath id="fwGc"><circle cx="0" cy="0" r="10"/></clipPath></defs>
<g transform="translate(22.6 11.4) scale(0.9700)"><circle cx="0" cy="0" r="10" fill="url(#fwGo)"/>
<g clip-path="url(#fwGc)" fill="url(#fwGg)">
<path d="M-9.6 -3 Q-9 -7 -5.5 -8.8 Q-2 -10.4 0.5 -9.4 Q-0.5 -7.6 -2.6 -7 Q-1.6 -5 -3.4 -3.6 Q-4.6 -1.4 -6 -1.6 Q-6.4 0.4 -4.6 1.4 L-5.6 1.8 Q-8.4 0.6 -9.6 -3z"/>
<path d="M-5.4 3.2 Q-3 2.4 -1.2 4 Q0.4 5.4 -0.6 7.4 Q-1.6 9.4 -3 10 Q-4.4 8 -4.6 6 Q-5.6 4.6 -5.4 3.2z"/>
<path d="M6.4 -6.6 Q8 -6.4 8.6 -4.4 Q10.4 -2 10 1.4 Q8.6 2.4 7.6 0.4 Q6 -1 6.6 -3 Q5.6 -5 6.4 -6.6z"/>
<path d="M2 -9.8 Q4 -9.6 5 -8.4 Q3.6 -7.6 2.4 -8.4z"/>
</g>
<circle cx="0" cy="0" r="10" fill="none" stroke="#0c1a66" stroke-width="0.5" opacity="0.6"/></g>
<path d="M22.8 13 L25.9 12.1 L25.9 28.6 L22.8 30.9z" fill="#8a361e"/>
<path d="M1.7 10.6 L5.5 9.6 L25.9 12.1 L22.8 13z" fill="#e4a888"/>
<path d="M1.7 10.6 L22.8 13 L22.8 30.9 L2.0 26.9z" fill="url(#fw1)"/>
<path d="M1.76 13.86 L22.80 16.58 M1.82 17.12 L22.80 20.16 M1.88 20.38 L22.80 23.74 M1.94 23.64 L22.80 27.32 M8.03 11.32 L8.07 14.68 M14.78 12.09 L14.80 15.55 M4.71 14.24 L4.76 17.55 M11.44 15.11 L11.47 18.52 M18.59 16.04 L18.60 19.55 M8.11 18.03 L8.16 21.39 M14.83 19.00 L14.85 22.46 M4.81 20.85 L4.86 24.16 M11.50 21.93 L11.54 25.33 M18.62 23.07 L18.63 26.58 M8.20 24.74 L8.24 28.10 M14.87 25.92 L14.90 29.38" stroke="#b09a94" stroke-width="0.7" fill="none" opacity="0.9"/>
<path d="M22.8 16.6 L25.9 15.5 M22.8 20.2 L25.9 18.9 M22.8 23.8 L25.9 22.2 M22.8 27.3 L25.9 25.4" stroke="#6a2a18" stroke-width="0.5"/>
</svg><div class="lbl"><span class="ln fit" style="letter-spacing:0.226px">Windows Firewall</span></div></div>
<div class="it" style="left:526px;top:150px"><svg width="32" height="32" viewBox="0 0 32 32">
<defs>
<linearGradient id="pr1" x1="0" y1="0" x2="1" y2="1"><stop offset="0" stop-color="#8a8e94"/><stop offset="0.5" stop-color="#2c3034"/><stop offset="1" stop-color="#4c5056"/></linearGradient>
<linearGradient id="pr2" x1="0" y1="0" x2="0" y2="1"><stop offset="0" stop-color="#eef0f4"/><stop offset="1" stop-color="#b4bac6"/></linearGradient>
<radialGradient id="pr3" cx="0.4" cy="0.4" r="0.6"><stop offset="0" stop-color="#0a2a70"/><stop offset="0.45" stop-color="#1c64d8"/><stop offset="1" stop-color="#58a8f4"/></radialGradient>
<linearGradient id="pr4" x1="0" y1="0" x2="1" y2="1"><stop offset="0" stop-color="#48a8f0"/><stop offset="1" stop-color="#1458c0"/></linearGradient>
</defs>
<path d="M20.5 2.7 L32.2 4.7 L28.9 14.4 L17.5 11.4z" fill="#fdfdfe" stroke="#b4b8c0" stroke-width="0.7"/>
<path d="M17.8 10.6 L18.6 11.2 L17.4 13.6 L16.6 13z" fill="#70747c"/>
<path d="M28.6 13.6 L29.4 14 L28.6 16 L27.8 15.4z" fill="#70747c"/>
<path d="M1.7 18.1 L11.4 12.1 L18.6 13.1 L14.8 19.8z" fill="url(#pr1)"/>
<path d="M1.7 18.1 L14.8 19.8 L14.8 22.4 L3 22.2 L1.7 21z" fill="#dfe2e8"/>
<path d="M1.9 19.4 L14.6 21" stroke="#34383c" stroke-width="0.9"/>
<path d="M3.4 22.4 L7.6 21 L14.8 22.6 L14.2 25.6z" fill="#fff" stroke="#c4c8d0" stroke-width="0.4"/>
<path d="M5 22.6 L8 21.6 L14 23 L13.6 25z" fill="url(#pr4)"/>
<path d="M9 22.4 L12 23.2 L11 24.4z" fill="#5cc080"/>
<rect x="14.7" y="14.8" width="17.9" height="14.8" rx="1.6" fill="url(#pr2)" stroke="#8e96a6" stroke-width="0.8"/>
<rect x="15.6" y="15.6" width="16.2" height="1.4" rx="0.7" fill="#fafbfc"/>
<rect x="16.1" y="17.6" width="1.5" height="8" rx="0.6" fill="#5c626e"/>
<path d="M20.2 16.5 L21.6 17.6 L20.2 18.7 L18.8 17.6z" fill="#2860d0"/>
<ellipse cx="28.2" cy="17.8" rx="1.5" ry="1.1" fill="#2c6cd8"/>
<circle cx="24.2" cy="22.8" r="4.7" fill="#eceef2" stroke="#a0a8b6" stroke-width="0.6"/>
<circle cx="24.2" cy="22.8" r="3.3" fill="url(#pr3)"/>
</svg><div class="lbl"><span class="ln fit" style="letter-spacing:-0.096px">Devices and Printers</span></div></div>
<div class="it" style="left:526px;top:200px"><svg width="32" height="32" viewBox="0 0 32 32">
<defs>
<linearGradient id="fd1" x1="0" y1="0" x2="1" y2="0"><stop offset="0" stop-color="#f4df8c"/><stop offset="0.6" stop-color="#f8e9a8"/><stop offset="1" stop-color="#fdf5d4"/></linearGradient>
<linearGradient id="fd2" x1="0" y1="0" x2="1" y2="0.6"><stop offset="0" stop-color="#dcb54a"/><stop offset="0.3" stop-color="#eed274"/><stop offset="0.7" stop-color="#ecce6c"/><stop offset="1" stop-color="#ddb74c"/></linearGradient>
<linearGradient id="fd3" x1="0" y1="0" x2="0" y2="1"><stop offset="0" stop-color="#38b0f0"/><stop offset="1" stop-color="#0a5cc0"/></linearGradient>
</defs>
<path d="M23 22 L27 26 L24 30 L22.9 29z" fill="#c0c0c8" opacity="0.3"/>
<path d="M6.7 2.2 L22.9 4 L22.9 29.3 L10.4 31.5 L6.7 20z" fill="url(#fd2)"/>

<path d="M3 1.7 L6.7 2.2 L10.4 6.2 L10.4 31.5 L3.4 26.9z" fill="url(#fd1)"/><path d="M9.3 5 L10.4 6.2 L10.4 31.5 L9.3 30.8z" fill="#fffef6"/><path d="M3 1.7 L3.4 26.9" stroke="#e2c461" stroke-width="0.5"/>
<path d="M10.4 6.2 L10.4 31.5 L11.4 31.3 L11.4 7.2z" fill="#c9a43c"/>
<rect x="22.1" y="21.4" width="1" height="6.2" fill="#f4f8fc"/><rect x="22.1" y="26" width="1" height="1.6" fill="#6aa0e0"/>
<rect x="15.5" y="3.5" width="15.6" height="12.2" fill="#fcfcfe" stroke="#6c6c78" stroke-width="1"/>
<rect x="16.1" y="4.1" width="14.4" height="1.5" fill="#dfe2ee"/>
<path d="M25.3 4.8h1M27.1 4.8h1M28.9 4.8h1" stroke="#4a5070" stroke-width="1"/>
<path d="M18.3 10.2 L20.4 12.4 L24.6 6.8" fill="none" stroke="url(#fd3)" stroke-width="1.8"/>
<path d="M24 11.5h5" stroke="#404858" stroke-width="1.2"/>
<path d="M18 13.4h9" stroke="#d0d4dc" stroke-width="0.6"/>
</svg><div class="lbl"><span class="ln fit" style="letter-spacing:0.107px">Folder Options</span></div></div>
<div class="it" style="left:526px;top:250px"><svg width="32" height="32" viewBox="0 0 32 32">
<defs>
<linearGradient id="is1" x1="0" y1="0" x2="1" y2="1"><stop offset="0" stop-color="#f4f4f6"/><stop offset="1" stop-color="#8c9098"/></linearGradient>
<clipPath id="is2"><path d="M26.5 19.6 Q29 20.6 31.6 20.4 Q32 27.6 26.5 31.6 Q21 27.6 21.4 20.4 Q24 20.6 26.5 19.6z"/></clipPath>
</defs>
<defs><radialGradient id="isGo" cx="0.38" cy="0.3" r="0.75"><stop offset="0" stop-color="#b4f2ff"/><stop offset="0.2" stop-color="#3ca8f0"/><stop offset="0.5" stop-color="#1c50c8"/><stop offset="0.8" stop-color="#12289a"/><stop offset="1" stop-color="#0a1460"/></radialGradient>
<radialGradient id="isGg" cx="0.38" cy="0.3" r="0.8"><stop offset="0" stop-color="#d4f480"/><stop offset="0.3" stop-color="#48c030"/><stop offset="0.75" stop-color="#1a8a24"/><stop offset="1" stop-color="#0c5a20"/></radialGradient>
<clipPath id="isGc"><circle cx="0" cy="0" r="10"/></clipPath></defs>
<g transform="translate(13.4 13.4) scale(1.2700)"><circle cx="0" cy="0" r="10" fill="url(#isGo)"/>
<g clip-path="url(#isGc)" fill="url(#isGg)">
<path d="M-9.6 -3 Q-9 -7 -5.5 -8.8 Q-2 -10.4 0.5 -9.4 Q-0.5 -7.6 -2.6 -7 Q-1.6 -5 -3.4 -3.6 Q-4.6 -1.4 -6 -1.6 Q-6.4 0.4 -4.6 1.4 L-5.6 1.8 Q-8.4 0.6 -9.6 -3z"/>
<path d="M-5.4 3.2 Q-3 2.4 -1.2 4 Q0.4 5.4 -0.6 7.4 Q-1.6 9.4 -3 10 Q-4.4 8 -4.6 6 Q-5.6 4.6 -5.4 3.2z"/>
<path d="M6.4 -6.6 Q8 -6.4 8.6 -4.4 Q10.4 -2 10 1.4 Q8.6 2.4 7.6 0.4 Q6 -1 6.6 -3 Q5.6 -5 6.4 -6.6z"/>
<path d="M2 -9.8 Q4 -9.6 5 -8.4 Q3.6 -7.6 2.4 -8.4z"/>
</g>
<circle cx="0" cy="0" r="10" fill="none" stroke="#0c1a66" stroke-width="0.5" opacity="0.6"/></g>
<path d="M12.2 15.6 L14 14.4 L22.8 15.2 L22.8 20 L20.6 21.4 L12.2 20.4z" fill="#c4c8d0" stroke="#7c828c" stroke-width="0.5"/>
<path d="M12.2 15.6 L20.6 16.6 L20.6 21.4 L12.2 20.4z" fill="#dfe2e8"/>
<path d="M13.4 16.8 L19.4 17.5 L19.4 20.2 L13.4 19.5z" fill="#9ca4b0"/>
<path d="M14 14.4 L22.8 15.2 L20.6 16.6 L12.2 15.6z" fill="#f2f3f6"/>
<path d="M26.5 18.2 Q29.4 19.6 32.8 19.2 Q33.4 28.6 26.5 33 Q19.6 28.6 20.2 19.2 Q23.6 19.6 26.5 18.2z" fill="url(#is1)" stroke="#80848c" stroke-width="0.6"/>
<g clip-path="url(#is2)">
<rect x="20" y="18" width="6.5" height="7.4" fill="#e03428"/>
<rect x="26.5" y="18" width="7" height="7.4" fill="#38a038"/>
<rect x="20" y="25.4" width="6.5" height="8" fill="#2a64c8"/>
<rect x="26.5" y="25.4" width="7" height="8" fill="#f4cc28"/>
<path d="M21 19 Q26 22 32 19 L32 21 Q26 24 21 21z" fill="#fff" opacity="0.25"/>
</g>
</svg><div class="lbl"><span class="ln fit" style="letter-spacing:-0.056px">iSCSI Initiator</span></div></div>
<div class="it" style="left:526px;top:300px"><svg width="32" height="32" viewBox="0 0 32 32">
<defs>
<radialGradient id="ms1" cx="0.36" cy="0.66" r="0.8"><stop offset="0" stop-color="#fbfbfb"/><stop offset="0.35" stop-color="#dedede"/><stop offset="0.75" stop-color="#a9a9ad"/><stop offset="1" stop-color="#6c6c72"/></radialGradient>
<linearGradient id="ms2" x1="0" y1="0" x2="1" y2="1"><stop offset="0" stop-color="#34364e"/><stop offset="1" stop-color="#12142a"/></linearGradient>
</defs>
<path d="M3 23.5 Q10 30 19 27.5 L27 20 L22 23z" fill="#9c9ca4" opacity="0.35"/>
<path d="M23 5.6 Q29 5.4 32.3 8.6 Q33 10.4 31.4 12.2 L24.6 19.4 Q23.4 21.6 22 22.6 L20.6 14z" fill="url(#ms2)"/>
<path d="M1.2 18.8 Q1.4 14.4 6.5 10.6 L13.8 5.4 Q17 3 22 2.6 Q27.6 3 31.4 7.6 Q27.4 8.6 24.8 11.2 Q22.4 13.8 22.6 17.4 Q22.8 21 21.4 22.8 Q16.4 27.6 9.6 26.2 Q1.2 23.6 1.2 18.8z" fill="url(#ms1)"/>
<path d="M22.6 17.4 Q22.4 13.8 24.8 11.2 Q27.4 8.6 31.4 7.6" fill="none" stroke="#8486c0" stroke-width="0.6"/>
<path d="M1.6 20.4 Q3.4 24.8 9.6 26.2 Q15 27.2 19.6 24.4" fill="none" stroke="#5c5c64" stroke-width="0.7" opacity="0.7"/>
<path d="M16.8 3.6 Q19 2.4 22.6 2.6 L20.8 5 Q19.4 7.4 17.8 7.8 Q16.4 6 16.8 3.6z" fill="#1c1e38"/>
<path d="M18.6 4.2 L20.1 5.3 L21.1 3.6" fill="none" stroke="#9ca0c4" stroke-width="0.7"/>
</svg><div class="lbl"><span class="ln fit" style="letter-spacing:0.05px">Mouse</span></div></div>
<div class="it" style="left:526px;top:350px"><svg width="32" height="32" viewBox="0 0 32 32">
<defs>
<linearGradient id="ph1" x1="0" y1="0" x2="1" y2="1"><stop offset="0" stop-color="#f2f3f6"/><stop offset="0.55" stop-color="#c2c6ce"/><stop offset="1" stop-color="#8c909a"/></linearGradient>
<linearGradient id="ph2" x1="0" y1="0" x2="1" y2="0"><stop offset="0" stop-color="#3c8ce8"/><stop offset="1" stop-color="#1c5cc8"/></linearGradient>
<linearGradient id="ph3" x1="0" y1="0" x2="0" y2="1"><stop offset="0" stop-color="#d4d6dc"/><stop offset="1" stop-color="#7c8088"/></linearGradient>
</defs>
<path d="M18.1 25.6 L31 21 L31.2 23.4 L19 30 L18.1 29.8z" fill="url(#ph3)"/>
<path d="M14 20 L27 17.5 L31 21 L18.1 25.8z" fill="#c8cad0"/>
<path d="M2.4 21.6 L18.1 25.4 L18.1 29.8 L2.7 25.6z" fill="#3c4048"/>
<path d="M4.4 24 L16.4 26.8 L16.4 28.4 L4.4 25.6z" fill="#2a88d8"/>
<path d="M6 24.4v1.6M8 24.9v1.6M10 25.4v1.6M12 25.8v1.6M14 26.3v1.6" stroke="#d8ecfc" stroke-width="0.8"/>
<path d="M2.4 18.4 L11.4 7 L26.2 9 Q28.6 10 28.9 12.2 L18.6 24 Q17 25 15 24.6 L3 21.6 Q2 20.4 2.4 18.4z" fill="url(#ph1)" stroke="#747882" stroke-width="0.6"/>
<path d="M15.5 9.3 L25.6 10.4 L24.5 12.9 L14.4 11.8z" fill="url(#ph2)"/>
<path d="M16.4 10 L24.6 10.9" stroke="#a8d0f8" stroke-width="0.6"/>
<g fill="#8ca4d8">
<path d="M13.2 13.6l2 .3l-.7 1.3l-2-.3z"/><path d="M16.4 14.1l2 .3l-.7 1.3l-2-.3z"/><path d="M19.6 14.6l2 .3l-.7 1.3l-2-.3z"/>
<path d="M11.8 16l2 .3l-.7 1.3l-2-.3z"/><path d="M15 16.5l2 .3l-.7 1.3l-2-.3z"/><path d="M18.2 17l2 .3l-.7 1.3l-2-.3z"/>
<path d="M10.4 18.4l2 .3l-.7 1.3l-2-.3z"/><path d="M13.6 18.9l2 .3l-.7 1.3l-2-.3z"/><path d="M16.8 19.4l2 .3l-.7 1.3l-2-.3z"/>
</g>
<path d="M2.6 18.6 Q1.6 16.6 4 14 L11.4 6.4 Q13.4 5 15.6 6.4 Q16 8 14.4 8.6 L12.4 9.4 L7 16.4 L6.4 18.6 Q5 20.6 2.6 18.6z" fill="#e6e8ec" stroke="#7c808a" stroke-width="0.6"/>
<path d="M11.4 10 L6.8 16" stroke="#484c54" stroke-width="1.1" stroke-linecap="round"/>
</svg><div class="lbl"><span class="ln fit" style="letter-spacing:0.113px">Phone and Modem</span></div></div>
<div class="it" style="left:526px;top:400px"><svg width="32" height="32" viewBox="0 0 32 32">
<defs>
<radialGradient id="rg1" cx="0.4" cy="0.35" r="0.75"><stop offset="0" stop-color="#ffffff"/><stop offset="0.7" stop-color="#eef1f6"/><stop offset="1" stop-color="#ccd2dc"/></radialGradient>
<linearGradient id="rg2" x1="0" y1="0" x2="1" y2="1"><stop offset="0" stop-color="#e8eaee"/><stop offset="1" stop-color="#9ea4ae"/></linearGradient>
</defs>
<ellipse cx="24" cy="25" rx="7" ry="2.4" fill="#b8b8c0" opacity="0.3"/>
<defs><radialGradient id="rgGo" cx="0.38" cy="0.3" r="0.75"><stop offset="0" stop-color="#b4f2ff"/><stop offset="0.2" stop-color="#3ca8f0"/><stop offset="0.5" stop-color="#1c50c8"/><stop offset="0.8" stop-color="#12289a"/><stop offset="1" stop-color="#0a1460"/></radialGradient>
<radialGradient id="rgGg" cx="0.38" cy="0.3" r="0.8"><stop offset="0" stop-color="#d4f480"/><stop offset="0.3" stop-color="#48c030"/><stop offset="0.75" stop-color="#1a8a24"/><stop offset="1" stop-color="#0c5a20"/></radialGradient>
<clipPath id="rgGc"><circle cx="0" cy="0" r="10"/></clipPath></defs>
<g transform="translate(19.6 12.4) scale(1.1700)"><circle cx="0" cy="0" r="10" fill="url(#rgGo)"/>
<g clip-path="url(#rgGc)" fill="url(#rgGg)">
<path d="M-9.6 -3 Q-9 -7 -5.5 -8.8 Q-2 -10.4 0.5 -9.4 Q-0.5 -7.6 -2.6 -7 Q-1.6 -5 -3.4 -3.6 Q-4.6 -1.4 -6 -1.6 Q-6.4 0.4 -4.6 1.4 L-5.6 1.8 Q-8.4 0.6 -9.6 -3z"/>
<path d="M-5.4 3.2 Q-3 2.4 -1.2 4 Q0.4 5.4 -0.6 7.4 Q-1.6 9.4 -3 10 Q-4.4 8 -4.6 6 Q-5.6 4.6 -5.4 3.2z"/>
<path d="M6.4 -6.6 Q8 -6.4 8.6 -4.4 Q10.4 -2 10 1.4 Q8.6 2.4 7.6 0.4 Q6 -1 6.6 -3 Q5.6 -5 6.4 -6.6z"/>
<path d="M2 -9.8 Q4 -9.6 5 -8.4 Q3.6 -7.6 2.4 -8.4z"/>
</g>
<circle cx="0" cy="0" r="10" fill="none" stroke="#0c1a66" stroke-width="0.5" opacity="0.6"/></g>
<circle cx="11.4" cy="22.8" r="9.7" fill="url(#rg1)" stroke="url(#rg2)" stroke-width="1.1"/>
<path d="M11.40 15.30L11.40 14.40M15.15 16.30L15.60 15.53M17.90 19.05L18.67 18.60M18.90 22.80L19.80 22.80M17.90 26.55L18.67 27.00M15.15 29.30L15.60 30.07M11.40 30.30L11.40 31.20M7.65 29.30L7.20 30.07M4.90 26.55L4.13 27.00M3.90 22.80L3.00 22.80M4.90 19.05L4.13 18.60M7.65 16.30L7.20 15.53" stroke="#8c94a4" stroke-width="0.7"/>
<path d="M11.4 23.8 V15.4" stroke="#3c546c" stroke-width="1.1"/>
<path d="M10.4 22.8 H17.6" stroke="#3c546c" stroke-width="1.1"/>
</svg><div class="lbl"><span class="ln fit" style="letter-spacing:0.08px">Region</span></div></div>
<div class="it" style="left:526px;top:450px"><svg width="32" height="32" viewBox="0 0 32 32">
<defs>
<linearGradient id="sy1" x1="0" y1="0" x2="1" y2="0.2"><stop offset="0" stop-color="#1420b8"/><stop offset="0.45" stop-color="#1c30c8"/><stop offset="0.55" stop-color="#6880e8"/><stop offset="1" stop-color="#3050d8"/></linearGradient>
<linearGradient id="sy2" x1="0" y1="0" x2="1" y2="0"><stop offset="0" stop-color="#a8a8a8"/><stop offset="0.5" stop-color="#dedede"/><stop offset="1" stop-color="#b4b4b4"/></linearGradient>
<radialGradient id="sy3" cx="0.45" cy="0.35" r="0.7"><stop offset="0" stop-color="#f0f0f0"/><stop offset="1" stop-color="#a8a8a8"/></radialGradient>
</defs>
<path d="M2 9.4 L5.5 7.4 L10 7.6 L10 23 L7.5 24.4 L2 23.6z" fill="url(#sy2)" stroke="#b0b0b0" stroke-width="0.4"/>
<path d="M2 9.4 L5.5 7.4 L10 7.6 L7 9.6z" fill="#f2f2f2"/>
<rect x="3" y="11.2" width="1.5" height="1.8" fill="#38c828"/>
<path d="M3 14.5h1.5M3 16h1.5" stroke="#a4a4a4" stroke-width="0.6"/>
<path d="M6 23.5 L12 22 L13 23.4 L7.5 25z" fill="#505050" opacity="0.5"/>
<ellipse cx="21.5" cy="27.2" rx="8.2" ry="3.7" fill="url(#sy3)"/>
<path d="M17 22 L16 26.4 Q21 28 26.5 26.6 L27 23z" fill="#c0c0c0"/>
<path d="M9.7 3.3 L32.3 6 L30.7 24.3 L8.3 20.9z" fill="#e6e2d2" stroke="#c0bcac" stroke-width="0.4"/>
<path d="M8.5 20 L30.7 23.4 L30.7 24.3 L8.3 20.9z" fill="#cfccc0"/>
<path d="M11.1 4.7 L30.9 7.4 L29.3 22.5 L9.7 19.2z" fill="url(#sy1)"/>
<path d="M12.5 6 L15 6.4 L14 17 L11.6 16.6z" fill="#3c54e0" opacity="0.4"/>
<path d="M14.6 14.2 L17.9 17.4 L25.4 8.2" fill="none" stroke="#fff" stroke-width="1.8"/>
<path d="M14.6 14.8 L17.9 18 L25.4 8.8" fill="none" stroke="#a8acc0" stroke-width="0.5" opacity="0.8"/>
</svg><div class="lbl"><span class="ln fit" style="letter-spacing:-0.16px">System</span></div></div>
<div class="it" style="left:526px;top:500px"><svg width="32" height="32" viewBox="0 0 32 32">
<defs>
<linearGradient id="tr1" x1="0" y1="0" x2="1" y2="0.15"><stop offset="0" stop-color="#1420b8"/><stop offset="0.5" stop-color="#1c30c8"/><stop offset="0.6" stop-color="#a8b8f4"/><stop offset="1" stop-color="#5a74e4"/></linearGradient>
<linearGradient id="tr2" x1="0" y1="0" x2="1" y2="0"><stop offset="0" stop-color="#a8a8a8"/><stop offset="0.4" stop-color="#dcdcdc"/><stop offset="1" stop-color="#c0c0c0"/></linearGradient>
<clipPath id="tr3"><rect x="2" y="6" width="28.6" height="22.4"/></clipPath>
</defs>
<rect x="1.5" y="4.5" width="29.6" height="24.4" rx="1.3" fill="#fdfdfd" stroke="#7e7e86" stroke-width="1"/>
<rect x="2.3" y="5.3" width="28" height="1.6" fill="#e6e8ee"/>
<path d="M24.5 5.9h1M26.5 5.9h1M28.5 5.9h1" stroke="#50566c" stroke-width="1"/>
<g clip-path="url(#tr3)">
<path d="M8.2 15 L10.8 14.6 L14.5 14 L14.5 26 L10.8 27.6 L8.2 27.4z" fill="url(#tr2)"/>
<rect x="8.2" y="15" width="2.6" height="12.5" fill="#a8a8a8" stroke="#808080" stroke-width="0.4"/>
<rect x="8.7" y="17" width="1.5" height="1.7" fill="#30c828"/>
<path d="M12 26 L30 28 L30 29 L12 28z" fill="#d8d8d8"/>
<path d="M17 22 L16 26.6 L26 27.6 L27 23z" fill="#b4b4b4"/>
<path d="M15.6 7.8 L32 9.6 L32 25.8 L14.2 22.6z" fill="#e8e6de"/>
<path d="M16.5 8.8 L32 10.5 L32 24.9 L15.1 21.8z" fill="url(#tr1)"/>
</g>
</svg><div class="lbl"><span class="ln fit" style="letter-spacing:0.23px">Troubleshooting</span></div></div>
<div class="it" style="left:526px;top:550px"><svg width="32" height="32" viewBox="0 0 32 32">
<defs>
<linearGradient id="wu1" x1="0" y1="0" x2="1" y2="1"><stop offset="0" stop-color="#9ed0f8"/><stop offset="1" stop-color="#4c98e4"/></linearGradient>
<linearGradient id="wu2" x1="0" y1="0" x2="1" y2="1"><stop offset="0" stop-color="#7cf060"/><stop offset="0.5" stop-color="#2cc828"/><stop offset="1" stop-color="#0c9414"/></linearGradient>
</defs>
<rect x="1.9" y="9.9" width="23" height="15.4" fill="url(#wu1)" stroke="#a0a4aa" stroke-width="1"/>
<path d="M21 13 Q15.5 14.5 14 21.8 L9.2 21.8 L15.6 28.4 L21.9 21.8 L17.6 21.8 Q17.4 16.5 21 13z" fill="url(#wu2)" stroke="#0e8a14" stroke-width="0.4"/>
<path d="M21.2 29 Q26.6 27.5 27.6 19.6 L32.8 19.6 L27.2 13 L21.2 19.6 L24.6 19.6 Q24.6 25 21.2 29z" fill="url(#wu2)" stroke="#0e8a14" stroke-width="0.4"/>
</svg><div class="lbl"><span class="ln fit" style="letter-spacing:0.214px">Windows Update</span></div></div>
</div></div>

<div id="sb"></div><div id="thumb"></div><div id="sbup"></div><div id="sbdn"></div>
<svg class="abs" style="left:827px;top:128px" width="17" height="17" viewBox="0 0 17 17"><path d="M4.5 10.5 L8.5 6.5 L12.5 10.5" fill="none" stroke="#444" stroke-width="1.3"/></svg>
<svg class="abs" style="left:827px;top:574px" width="17" height="17" viewBox="0 0 17 17"><path d="M4.5 6.5 L8.5 10.5 L12.5 6.5" fill="none" stroke="#444" stroke-width="1.3"/></svg>
<svg class="abs" style="left:832px;top:397px" width="8" height="9" viewBox="0 0 8 9"><path d="M0 1 h7 M0 4 h7 M0 7 h7" stroke="#5c5c5c" stroke-width="2"/></svg>
</body>
</html>
